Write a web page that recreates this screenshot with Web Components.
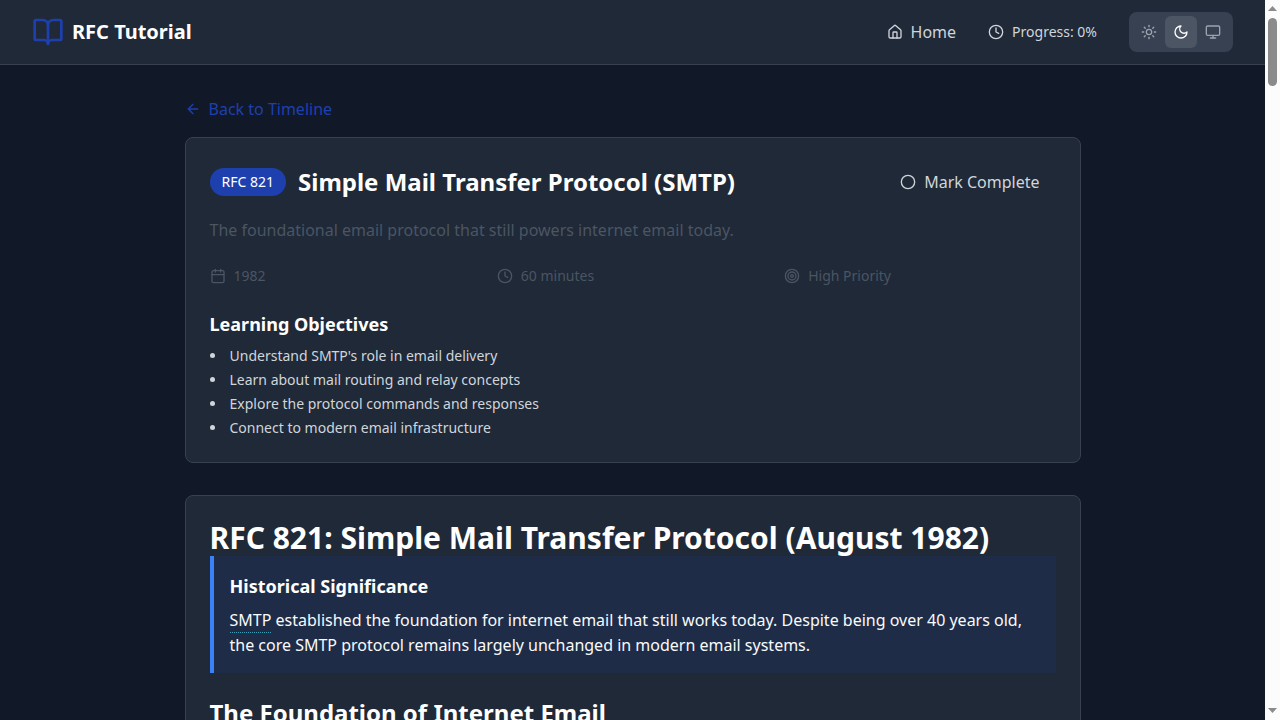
<!DOCTYPE html>
<html lang="en">
<head>
<meta charset="utf-8">
<meta name="viewport" content="width=device-width, initial-scale=1">
<title>RFC Tutorial</title>
<style>
  body {
    margin: 0;
    background: #111827;
    color: #f9fafb;
    font: 16px/24px "Noto Sans", sans-serif;
    --surface: #1f2937;
    --line: #374151;
    --primary: #1e40af;
    --text: #d1d5db;
    --muted: #4b5563;
  }
</style>
</head>
<body>
<rfc-app></rfc-app>

<script>
const ICONS = {
  book: '<path d="M12 7v14"/><path d="M3 18a1 1 0 0 1-1-1V4a1 1 0 0 1 1-1h5a4 4 0 0 1 4 4 4 4 0 0 1 4-4h5a1 1 0 0 1 1 1v13a1 1 0 0 1-1 1h-6a3 3 0 0 0-3 3 3 3 0 0 0-3-3z"/>',
  home: '<path d="M15 21v-8a1 1 0 0 0-1-1h-4a1 1 0 0 0-1 1v8"/><path d="M3 10a2 2 0 0 1 .709-1.528l7-5.999a2 2 0 0 1 2.582 0l7 5.999A2 2 0 0 1 21 10v9a2 2 0 0 1-2 2H5a2 2 0 0 1-2-2z"/>',
  clock: '<circle cx="12" cy="12" r="10"/><path d="M12 6v6l4 2"/>',
  sun: '<circle cx="12" cy="12" r="4"/><path d="M12 2v2"/><path d="M12 20v2"/><path d="m4.93 4.93 1.41 1.41"/><path d="m17.66 17.66 1.41 1.41"/><path d="M2 12h2"/><path d="M20 12h2"/><path d="m6.34 17.66-1.41 1.41"/><path d="m19.07 4.93-1.41 1.41"/>',
  moon: '<path d="M12 3a6 6 0 0 0 9 9 9 9 0 1 1-9-9Z"/>',
  monitor: '<rect width="20" height="14" x="2" y="3" rx="2"/><path d="M8 21h8"/><path d="M12 17v4"/>',
  back: '<path d="m12 19-7-7 7-7"/><path d="M19 12H5"/>',
  circle: '<circle cx="12" cy="12" r="10"/>',
  calendar: '<path d="M8 2v4"/><path d="M16 2v4"/><rect width="18" height="18" x="3" y="4" rx="2"/><path d="M3 10h18"/>',
  target: '<circle cx="12" cy="12" r="10"/><circle cx="12" cy="12" r="6"/><circle cx="12" cy="12" r="2"/>'
};

function define(name, render) {
  customElements.define(name, class extends HTMLElement {
    constructor() {
      super();
      this.attachShadow({ mode: "open" });
    }
    connectedCallback() {
      this.shadowRoot.innerHTML = render(this);
    }
  });
}

define("rfc-icon", el => `
  <style>
    :host { display: block; flex: none; width: 16px; height: 16px; }
    :host([large]) { width: 32px; height: 32px; }
    svg { display: block; width: 100%; height: 100%; }
  </style>
  <svg viewBox="0 0 24 24" fill="none" stroke="currentColor" stroke-width="2" stroke-linecap="round" stroke-linejoin="round" aria-hidden="true">${ICONS[el.getAttribute("name")]}</svg>`);

define("theme-switch", () => `
  <style>
    :host { display: flex; padding: 4px; border-radius: 8px; background: #374151; }
    button { display: block; margin: 0; padding: 8px; border: 0; border-radius: 6px; background: none; color: #9ca3af; cursor: pointer; }
    button[aria-pressed="true"] { background: #4b5563; color: #fff; }
  </style>
  <button type="button" aria-label="Light theme" aria-pressed="false"><rfc-icon name="sun"></rfc-icon></button>
  <button type="button" aria-label="Dark theme" aria-pressed="true"><rfc-icon name="moon"></rfc-icon></button>
  <button type="button" aria-label="System theme" aria-pressed="false"><rfc-icon name="monitor"></rfc-icon></button>`);

define("rfc-header", () => `
  <style>
    :host { display: block; background: var(--surface); border-bottom: 1px solid var(--line); }
    header { display: flex; align-items: center; justify-content: space-between; min-height: 64px; padding: 0 32px; }
    a { display: flex; align-items: center; gap: 8px; color: inherit; text-decoration: none; }
    .brand { font-size: 20px; line-height: 28px; font-weight: 700; color: #fff; }
    .brand rfc-icon { color: var(--primary); }
    nav { display: flex; align-items: center; gap: 32px; color: var(--text); }
    .progress { display: flex; align-items: center; gap: 8px; font-size: 14px; line-height: 20px; }
  </style>
  <header>
    <a class="brand" href="#"><rfc-icon name="book" large></rfc-icon><span>RFC Tutorial</span></a>
    <nav>
      <a href="#"><rfc-icon name="home"></rfc-icon><span>Home</span></a>
      <div class="progress"><rfc-icon name="clock"></rfc-icon><span>Progress: 0%</span></div>
      <theme-switch></theme-switch>
    </nav>
  </header>`);

define("rfc-card", () => `
  <style>
    :host { display: block; padding: 24px; border: 1px solid var(--line); border-radius: 8px; background: var(--surface); }
  </style>
  <slot></slot>`);

define("meta-item", el => `
  <style>
    :host { display: flex; align-items: center; gap: 8px; font-size: 14px; line-height: 20px; color: var(--muted); }
  </style>
  <rfc-icon name="${el.getAttribute("icon")}"></rfc-icon><span><slot></slot></span>`);

define("lesson-summary", () => `
  <style>
    :host { display: block; }
    .top { display: flex; align-items: center; justify-content: space-between; margin-bottom: 16px; }
    .title { display: flex; align-items: center; gap: 12px; }
    .badge { padding: 4px 12px; border-radius: 14px; background: var(--primary); color: #fff; font-size: 14px; line-height: 20px; }
    h1 { margin: 0; font-size: 24px; line-height: 32px; font-weight: 700; color: #fff; }
    button { display: flex; align-items: center; gap: 8px; margin: 0; padding: 8px 16px; border: 0; background: none; color: var(--text); font: inherit; cursor: pointer; }
    p { margin: 0 0 24px; color: var(--muted); }
    .meta { display: grid; grid-template-columns: repeat(3, 1fr); gap: 16px; margin-bottom: 24px; }
    h2 { margin: 0 0 8px; font-size: 18px; line-height: 28px; font-weight: 700; color: #fff; }
    ul { display: grid; gap: 4px; margin: 0; padding: 0; list-style: disc inside; color: var(--text); font-size: 14px; line-height: 20px; }
  </style>
  <rfc-card>
    <div class="top">
      <div class="title"><span class="badge">RFC 821</span><h1>Simple Mail Transfer Protocol (SMTP)</h1></div>
      <button type="button"><rfc-icon name="circle"></rfc-icon><span>Mark Complete</span></button>
    </div>
    <p>The foundational email protocol that still powers internet email today.</p>
    <div class="meta">
      <meta-item icon="calendar">1982</meta-item>
      <meta-item icon="clock">60 minutes</meta-item>
      <meta-item icon="target">High Priority</meta-item>
    </div>
    <h2>Learning Objectives</h2>
    <ul>
      <li>Understand SMTP's role in email delivery</li>
      <li>Learn about mail routing and relay concepts</li>
      <li>Explore the protocol commands and responses</li>
      <li>Connect to modern email infrastructure</li>
    </ul>
  </rfc-card>`);

define("info-callout", () => `
  <style>
    :host { display: block; padding: 16px; border-left: 4px solid #3b82f6; background: rgba(30, 58, 138, 0.2); }
    h3 { margin: 0 0 8px; font-size: 18px; line-height: 28px; font-weight: 700; color: #fff; }
  </style>
  <h3><slot name="title"></slot></h3>
  <slot></slot>`);

define("lesson-article", () => `
  <style>
    :host { display: block; }
    h1 { margin: 0; font-size: 30px; line-height: 36px; font-weight: 700; color: #fff; }
    h2 { margin: 24px 0 0; font-size: 24px; line-height: 32px; font-weight: 700; color: #fff; }
    p { margin: 0; }
    abbr { display: inline-block; border-bottom: 1px dotted #3b9fb8; text-decoration: none; cursor: help; }
  </style>
  <rfc-card>
    <article>
      <h1>RFC 821: Simple Mail Transfer Protocol (August 1982)</h1>
      <info-callout>
        <span slot="title">Historical Significance</span>
        <p><abbr>SMTP</abbr> established the foundation for internet email that still works today. Despite being over 40 years old, the core SMTP protocol remains largely unchanged in modern email systems.</p>
      </info-callout>
      <h2>The Foundation of Internet Email</h2>
    </article>
  </rfc-card>`);

define("scroll-rail", () => `
  <style>
    :host { display: flex; flex: none; flex-direction: column; align-items: center; box-sizing: border-box; width: 15px; padding: 6px 0; background: #fcfcfc; color: #8b8b8b; }
    svg { display: block; flex: none; width: 9px; height: 6px; fill: currentColor; }
    .track { flex: 1; width: 9px; padding: 6px 0; }
    .thumb { height: 10%; border-radius: 5px; background: currentColor; }
  </style>
  <svg viewBox="0 0 9 6" aria-hidden="true"><path d="M0 5 4.500 0 9 5z"/></svg>
  <div class="track"><div class="thumb"></div></div>
  <svg viewBox="0 0 9 6" aria-hidden="true"><path d="M0 0 4.500 5 9 0z"/></svg>`);

define("rfc-app", () => `
  <style>
    :host { display: flex; height: 100vh; }
    .page { flex: 1; min-width: 0; overflow-y: auto; scrollbar-width: none; }
    main { display: grid; gap: 32px; max-width: 896px; margin: 0 auto; padding: 32px; }
    .back { display: inline-flex; align-items: center; gap: 8px; margin-bottom: 16px; color: var(--primary); text-decoration: none; }
  </style>
  <div class="page">
    <rfc-header></rfc-header>
    <main>
      <section>
        <a class="back" href="#"><rfc-icon name="back"></rfc-icon><span>Back to Timeline</span></a>
        <lesson-summary></lesson-summary>
      </section>
      <lesson-article></lesson-article>
    </main>
  </div>
  <scroll-rail aria-hidden="true"></scroll-rail>`);
</script>
</body>
</html>
